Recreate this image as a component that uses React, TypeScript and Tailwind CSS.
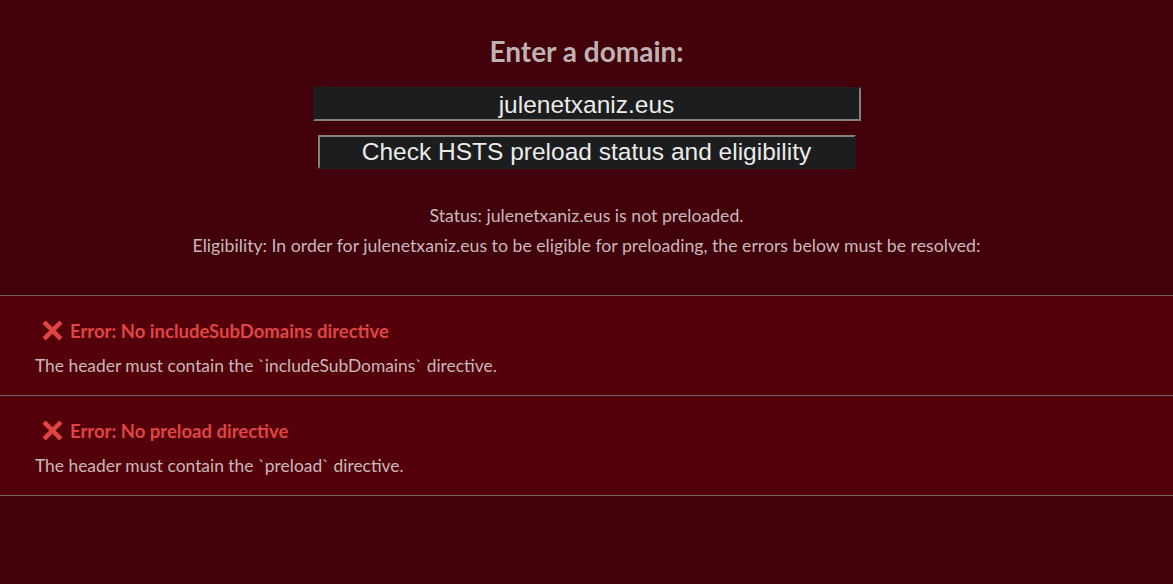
import React, { useState } from 'react';

const errors = [
    { title: 'Error: No includeSubDomains directive', text: 'The header must contain the `includeSubDomains` directive.' },
    { title: 'Error: No preload directive', text: 'The header must contain the `preload` directive.' },
];

const CrossIcon = () => (
    <svg width="21" height="21" viewBox="0 0 20 20" className="shrink-0">
        <path d="M3.5 3.5 L16.5 16.5 M16.5 3.5 L3.5 16.5" stroke="#e04545" strokeWidth="4.2" strokeLinecap="square" />
    </svg>
);

export default function App() {
    const [domain, setDomain] = useState('julenetxaniz.eus');

    return (
        <div className="min-h-[584px] bg-[#41000a] text-[#c9b9b9]" style={{ fontFamily: 'Lato, "Open Sans", sans-serif' }}>
            <div className="flex flex-col items-center pt-[36px]">
                <h2 className="text-[28px] font-bold leading-[30px] text-[#bfb2b2]">Enter a domain:</h2>
                <input
                    value={domain}
                    onChange={(e) => setDomain(e.target.value)}
                    className="mt-[21px] w-[548px] h-[34px] pt-[2px] bg-[#1b1d1f] text-[#ecebe8] text-center text-[24.5px] outline-none border-2 border-t-[#1b1d1f] border-l-[#1b1d1f] border-r-[#86807a] border-b-[#86807a]"
                    style={{ fontFamily: '"Liberation Sans", Arial, sans-serif' }}
                />
                <button
                    className="mt-[14px] w-[538px] h-[34px] bg-[#1b1d1f] text-[#ecebe8] text-[24.5px] leading-[28px] border-2 border-t-[#86807a] border-l-[#86807a] border-r-[#1b1d1f] border-b-[#1b1d1f]"
                    style={{ fontFamily: '"Liberation Sans", Arial, sans-serif' }}
                >
                    Check HSTS preload status and eligibility
                </button>
                <div className="mt-[32px] text-center text-[17.7px] leading-[30px]">
                    <p>Status: julenetxaniz.eus is not preloaded.</p>
                    <p>Eligibility: In order for julenetxaniz.eus to be eligible for preloading, the errors below must be resolved:</p>
                </div>
            </div>
            <div className="mt-[34px] border-t border-[#76605f]">
                {errors.map((err) => (
                    <div key={err.title} className="bg-[#53000a] border-b border-[#76605f] h-[100px] px-[35px] pt-[24px]">
                        <div className="flex items-center gap-[7px] pl-[7px] text-[#e04545] font-bold text-[18.5px] leading-[20px]">
                            <CrossIcon />
                            <span>{err.title}</span>
                        </div>
                        <p className="mt-[15px] text-[17.4px] leading-[20px]">{err.text}</p>
                    </div>
                ))}
            </div>
        </div>
    );
}
